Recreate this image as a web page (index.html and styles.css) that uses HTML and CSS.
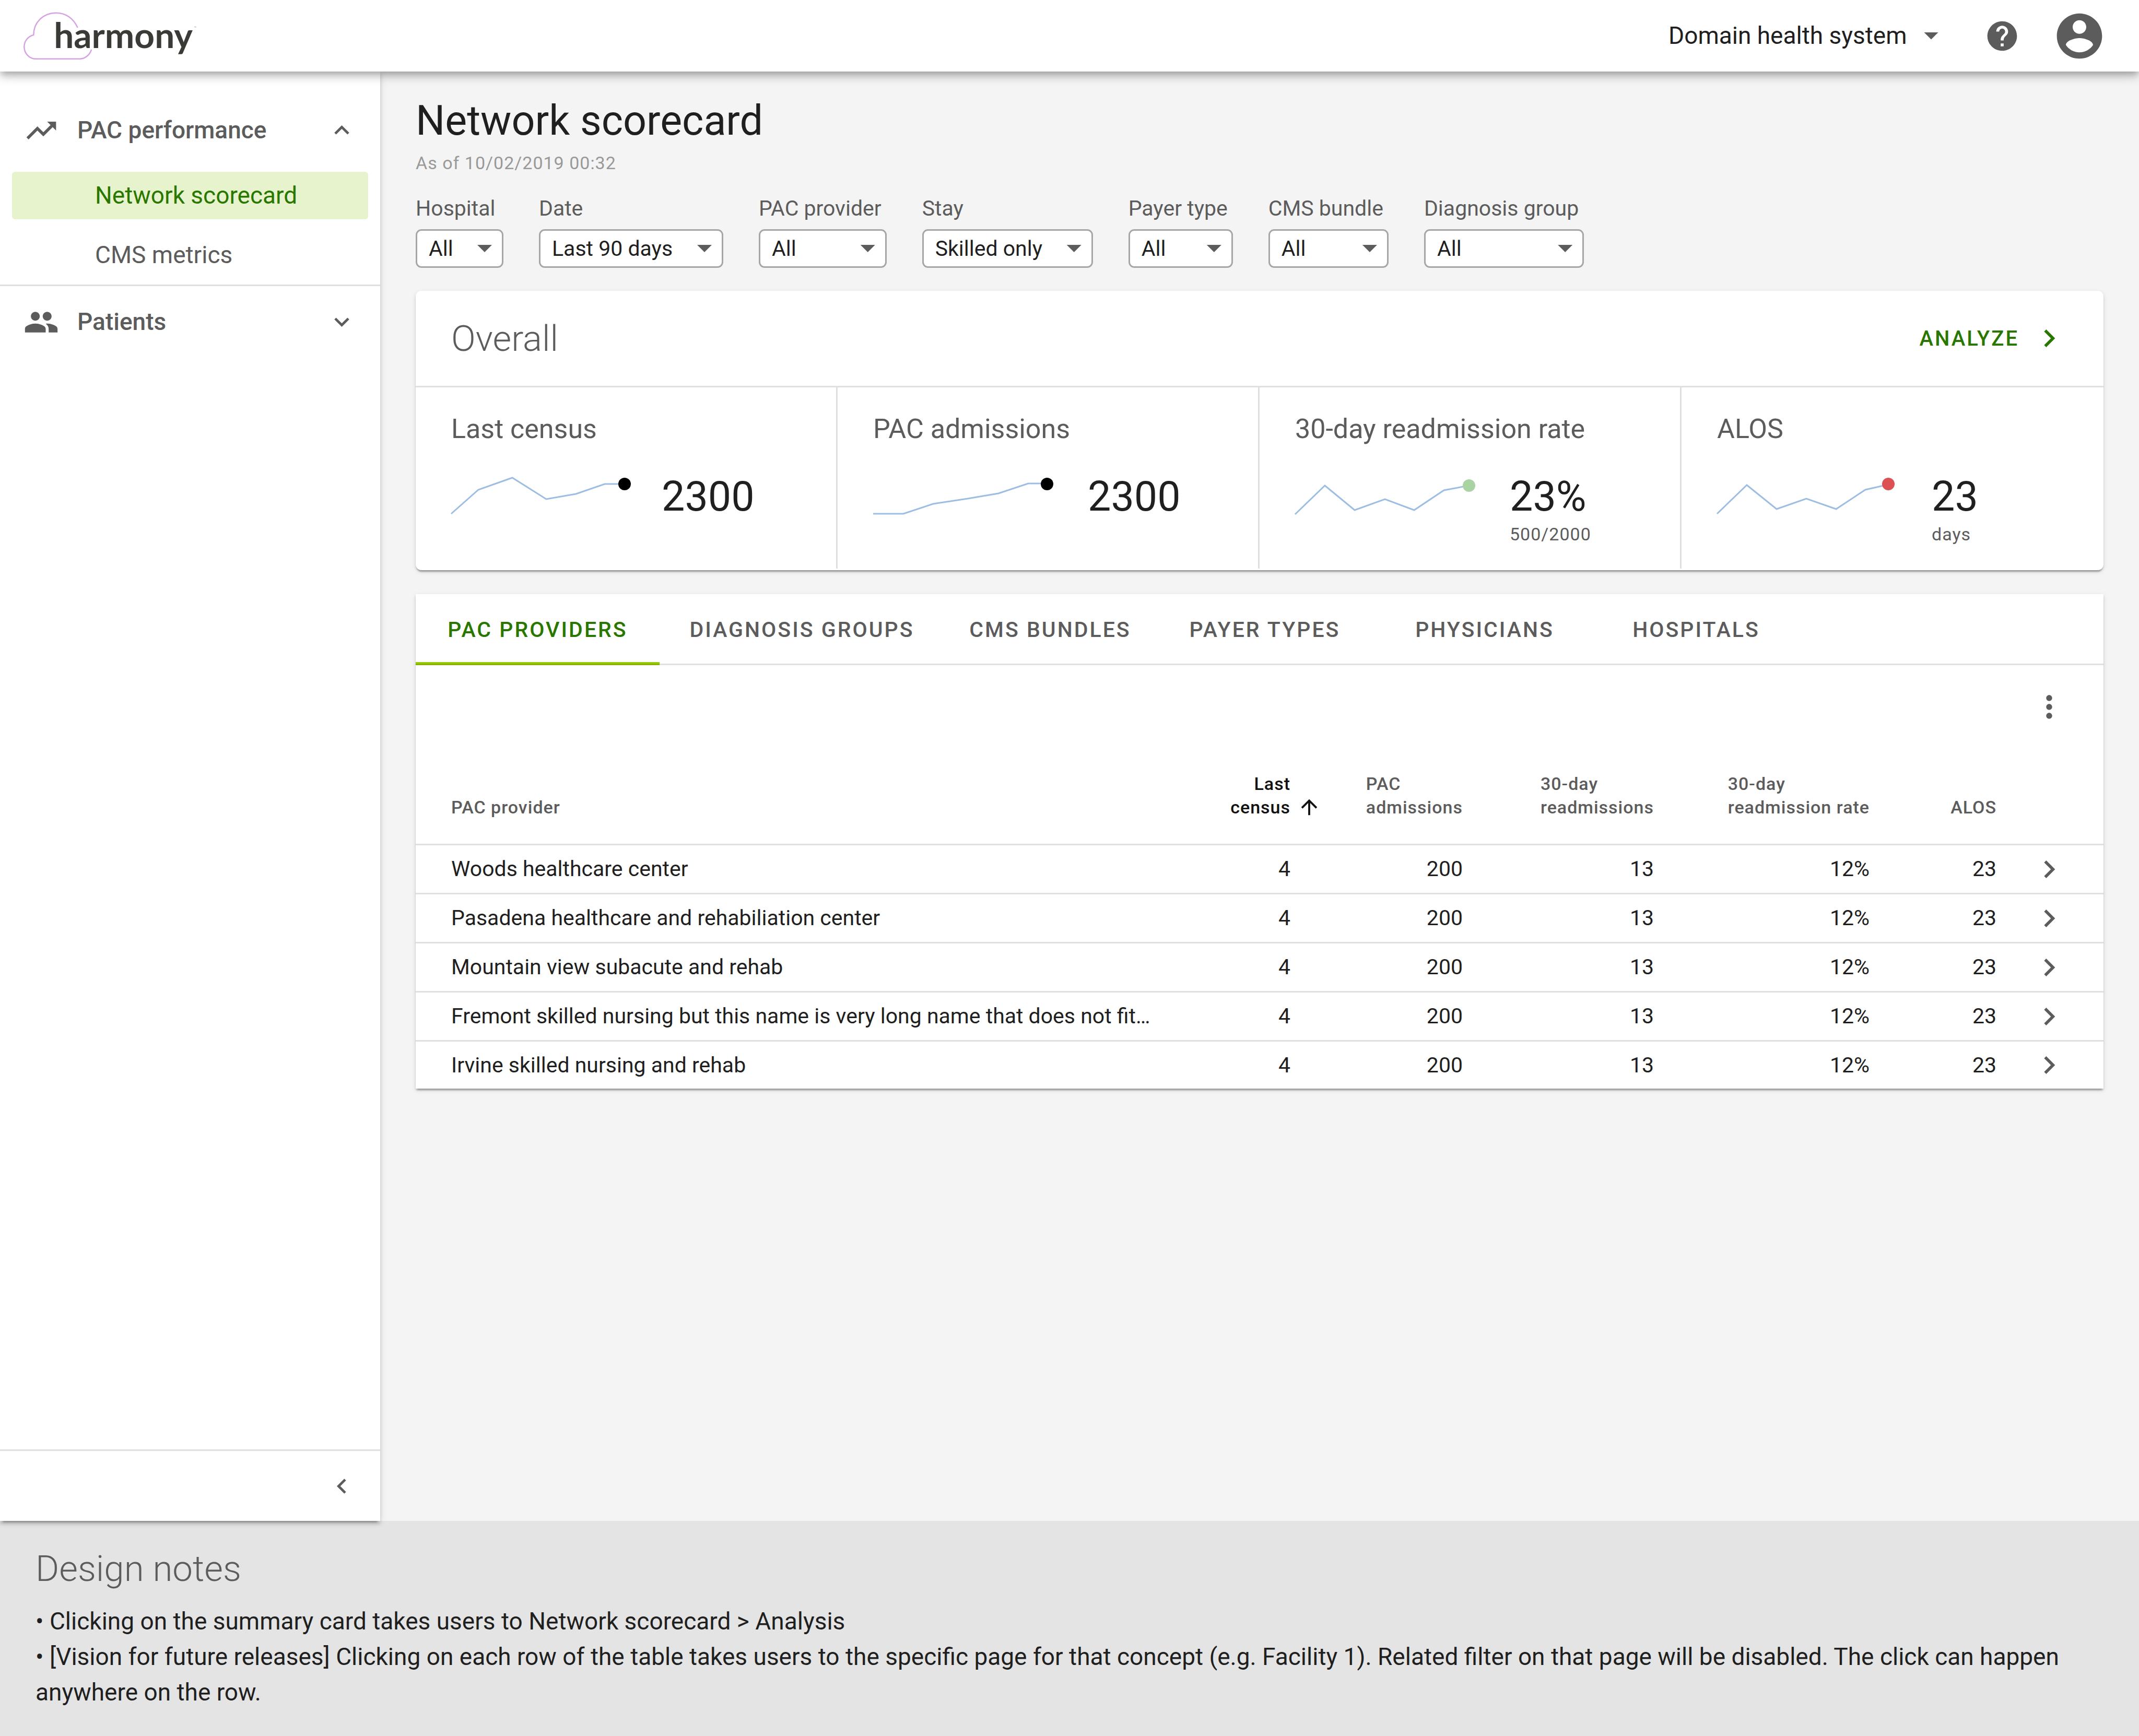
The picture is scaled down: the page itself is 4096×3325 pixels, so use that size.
FILE: index.html
```html
<!DOCTYPE html>
<html lang="en">
<head>
<meta charset="utf-8">
<meta name="viewport" content="width=device-width, initial-scale=1">
<title>Network scorecard</title>
<link rel="stylesheet" href="styles.css">
</head>
<body>
<svg class="sprite" aria-hidden="true">
  <symbol id="trend" viewBox="0 0 24 24"><path d="M16 6l2.29 2.29-4.88 4.88-4-4L2 16.59 3.41 18l6-6 4 4 6.3-6.29L22 12V6z"/></symbol>
  <symbol id="people" viewBox="0 0 24 24"><path d="M16 11c1.66 0 2.99-1.34 2.99-3S17.66 5 16 5c-1.66 0-3 1.34-3 3s1.34 3 3 3zm-8 0c1.66 0 2.99-1.34 2.99-3S9.66 5 8 5C6.34 5 5 6.34 5 8s1.34 3 3 3zm0 2c-2.33 0-7 1.17-7 3.5V19h14v-2.5c0-2.33-4.67-3.5-7-3.5zm8 0c-.29 0-.62.02-.97.05 1.16.84 1.97 1.97 1.97 3.45V19h6v-2.5c0-2.33-4.67-3.5-7-3.5z"/></symbol>
  <symbol id="less" viewBox="0 0 24 24"><path d="M12 8l-6 6 1.41 1.41L12 10.83l4.59 4.58L18 14z"/></symbol>
  <symbol id="more" viewBox="0 0 24 24"><path d="M16.59 8.59L12 13.17 7.41 8.59 6 10l6 6 6-6z"/></symbol>
  <symbol id="left" viewBox="0 0 24 24"><path d="M15.41 7.41L14 6l-6 6 6 6 1.41-1.41L10.83 12z"/></symbol>
  <symbol id="right" viewBox="0 0 24 24"><path d="M10 6L8.59 7.41 13.17 12l-4.58 4.59L10 18l6-6z"/></symbol>
  <symbol id="up" viewBox="0 0 24 24"><path d="M4 12l1.41 1.41L11 7.83V20h2V7.83l5.58 5.59L20 12l-8-8-8 8z"/></symbol>
  <symbol id="dots" viewBox="0 0 24 24"><path d="M12 8c1.1 0 2-.9 2-2s-.9-2-2-2-2 .9-2 2 .9 2 2 2zm0 2c-1.1 0-2 .9-2 2s.9 2 2 2 2-.9 2-2-.9-2-2-2zm0 6c-1.1 0-2 .9-2 2s.9 2 2 2 2-.9 2-2-.9-2-2-2z"/></symbol>
  <symbol id="help" viewBox="0 0 24 24"><path d="M12 2C6.48 2 2 6.48 2 12s4.48 10 10 10 10-4.48 10-10S17.52 2 12 2zm1 17h-2v-2h2v2zm2.07-7.75l-.9.92C13.45 12.9 13 13.5 13 15h-2v-.5c0-1.1.45-2.1 1.17-2.83l1.24-1.26c.37-.36.59-.86.59-1.41 0-1.1-.9-2-2-2s-2 .9-2 2H8c0-2.21 1.79-4 4-4s4 1.79 4 4c0 .88-.36 1.68-.93 2.25z"/></symbol>
  <symbol id="account" viewBox="0 0 24 24"><path d="M12 2C6.48 2 2 6.48 2 12s4.48 10 10 10 10-4.48 10-10S17.52 2 12 2zm0 3c1.66 0 3 1.34 3 3s-1.34 3-3 3-3-1.34-3-3 1.34-3 3-3zm0 14.2c-2.5 0-4.71-1.28-6-3.22.03-1.99 4-3.08 6-3.08 1.99 0 5.97 1.09 6 3.08-1.29 1.94-3.5 3.22-6 3.22z"/></symbol>
</svg>

<header class="topbar">
  <a class="brand" href="#">
    <svg class="brand-logo" viewBox="0 0 1140 360" role="img" aria-label="harmony">
      <path class="cloud" d="M466 268C456 300 428 325 395 325H130C88 325 58 290 58 252C58 215 84 187 115 180C115 105 172 46 252 46C310 46 358 80 382 136"/>
      <text class="wordmark" x="238" y="258">harmony</text>
      <text class="mark" x="1088" y="146">™</text>
    </svg>
  </a>
  <div class="topbar-tools">
    <span class="picker picker-plain">
      <select aria-label="Organization"><option>Domain health system</option></select>
    </span>
    <button class="icon-button" type="button" aria-label="Help"><svg class="icon"><use href="#help"/></svg></button>
    <button class="icon-button" type="button" aria-label="Account"><svg class="icon icon-large"><use href="#account"/></svg></button>
  </div>
</header>

<div class="layout">
  <nav class="sidebar">
    <button class="nav-group" type="button"><svg class="icon"><use href="#trend"/></svg><span class="nav-title">PAC performance</span><svg class="icon icon-small"><use href="#less"/></svg></button>
    <div class="nav-items">
      <a class="nav-item nav-item-active" href="#">Network scorecard</a>
      <a class="nav-item" href="#">CMS metrics</a>
    </div>
    <button class="nav-group nav-group-ruled" type="button"><svg class="icon"><use href="#people"/></svg><span class="nav-title">Patients</span><svg class="icon icon-small"><use href="#more"/></svg></button>
    <button class="nav-collapse" type="button" aria-label="Collapse"><svg class="icon icon-small"><use href="#left"/></svg></button>
  </nav>

  <main class="content">
    <h1 class="page-title">Network scorecard</h1>
    <p class="as-of">As of 10/02/2019 00:32</p>

    <form class="filters">
      <label class="filter"><span class="filter-label">Hospital</span><span class="picker"><select><option>All</option></select></span></label>
      <label class="filter"><span class="filter-label">Date</span><span class="picker"><select><option>Last 90 days</option></select></span></label>
      <label class="filter"><span class="filter-label">PAC provider</span><span class="picker"><select><option>All</option></select></span></label>
      <label class="filter"><span class="filter-label">Stay</span><span class="picker"><select><option>Skilled only</option></select></span></label>
      <label class="filter"><span class="filter-label">Payer type</span><span class="picker"><select><option>All</option></select></span></label>
      <label class="filter"><span class="filter-label">CMS bundle</span><span class="picker"><select><option>All</option></select></span></label>
      <label class="filter"><span class="filter-label">Diagnosis group</span><span class="picker"><select><option>All</option></select></span></label>
    </form>

    <section class="card overall">
      <div class="overall-head">
        <h2 class="section-title">Overall</h2>
        <a class="analyze" href="#">ANALYZE<svg class="icon"><use href="#right"/></svg></a>
      </div>
      <div class="metrics">
        <div class="metric">
          <h3 class="metric-name">Last census</h3>
          <div class="metric-body">
            <svg class="spark spark-short" viewBox="0 2 336 91"><polyline points="0,80 52,34 117,11 182,52 239,42 294,23 332,23"/><circle cx="332" cy="23" r="12"/></svg>
            <div><p class="metric-value">2300</p></div>
          </div>
        </div>
        <div class="metric">
          <h3 class="metric-name">PAC admissions</h3>
          <div class="metric-body">
            <svg class="spark" viewBox="0 2 344 91"><polyline points="0,80 58,80 115,61 181,51 240,41 297,22 333,22"/><circle cx="333" cy="23" r="12"/></svg>
            <div><p class="metric-value">2300</p></div>
          </div>
        </div>
        <div class="metric">
          <h3 class="metric-name">30-day readmission rate</h3>
          <div class="metric-body">
            <svg class="spark spark-good" viewBox="0 2 344 91"><polyline points="0,81 57,26 114,73 172,52 228,73 285,35 333,26"/><circle cx="333" cy="26" r="12"/></svg>
            <div><p class="metric-value">23%</p><p class="metric-note">500/2000</p></div>
          </div>
        </div>
        <div class="metric">
          <h3 class="metric-name">ALOS</h3>
          <div class="metric-body">
            <svg class="spark spark-bad" viewBox="0 2 344 91"><polyline points="0,80 57,25 114,71 171,51 228,71 284,34 328,24"/><circle cx="328" cy="23" r="12"/></svg>
            <div><p class="metric-value">23</p><p class="metric-note">days</p></div>
          </div>
        </div>
      </div>
    </section>

    <section class="card">
      <div class="tabs" role="tablist">
        <button class="tab tab-active" type="button" role="tab" aria-selected="true">PAC PROVIDERS</button>
        <button class="tab" type="button" role="tab">DIAGNOSIS GROUPS</button>
        <button class="tab" type="button" role="tab">CMS BUNDLES</button>
        <button class="tab" type="button" role="tab">PAYER TYPES</button>
        <button class="tab" type="button" role="tab">PHYSICIANS</button>
        <button class="tab" type="button" role="tab">HOSPITALS</button>
      </div>
      <div class="table-tools">
        <button class="icon-button" type="button" aria-label="More"><svg class="icon"><use href="#dots"/></svg></button>
      </div>
      <table class="providers">
        <colgroup><col><col class="col-census"><col class="col-admissions"><col class="col-readmissions"><col class="col-rate"><col class="col-alos"><col class="col-open"></colgroup>
        <thead>
          <tr>
            <th class="name" scope="col">PAC provider</th>
            <th class="sorted" scope="col" aria-sort="ascending"><button class="sort" type="button"><span>Last<br>census</span><svg class="icon icon-tiny"><use href="#up"/></svg></button></th>
            <th scope="col"><span class="heading">PAC<br>admissions</span></th>
            <th scope="col"><span class="heading">30-day<br>readmissions</span></th>
            <th scope="col"><span class="heading">30-day<br>readmission rate</span></th>
            <th scope="col">ALOS</th>
            <td></td>
          </tr>
        </thead>
        <tbody>
          <tr><td class="name">Woods healthcare center</td><td class="census">4</td><td>200</td><td>13</td><td>12%</td><td>23</td><td><a class="open" href="#" aria-label="Open"><svg class="icon"><use href="#right"/></svg></a></td></tr>
          <tr><td class="name">Pasadena healthcare and rehabiliation center</td><td class="census">4</td><td>200</td><td>13</td><td>12%</td><td>23</td><td><a class="open" href="#" aria-label="Open"><svg class="icon"><use href="#right"/></svg></a></td></tr>
          <tr><td class="name">Mountain view subacute and rehab</td><td class="census">4</td><td>200</td><td>13</td><td>12%</td><td>23</td><td><a class="open" href="#" aria-label="Open"><svg class="icon"><use href="#right"/></svg></a></td></tr>
          <tr><td class="name">Fremont skilled nursing but this name is very long name that does not fit…</td><td class="census">4</td><td>200</td><td>13</td><td>12%</td><td>23</td><td><a class="open" href="#" aria-label="Open"><svg class="icon"><use href="#right"/></svg></a></td></tr>
          <tr><td class="name">Irvine skilled nursing and rehab</td><td class="census">4</td><td>200</td><td>13</td><td>12%</td><td>23</td><td><a class="open" href="#" aria-label="Open"><svg class="icon"><use href="#right"/></svg></a></td></tr>
        </tbody>
      </table>
    </section>
  </main>
</div>

<footer class="notes">
  <h2 class="section-title">Design notes</h2>
  <p class="note">• Clicking on the summary card takes users to Network scorecard &gt; Analysis</p>
  <p class="note">• [Vision for future releases] Clicking on each row of the table takes users to the specific page for that concept (e.g. Facility 1). Related filter on that page will be disabled. The click can happen anywhere on the row.</p>
</footer>
</body>
</html>
```
FILE: styles.css
```css
* {
  box-sizing: border-box;
  margin: 0;
  padding: 0;
}

:root {
  --ink: #1f1f1f;
  --muted: #5c5c5c;
  --rule: #e0e0e0;
  --green: #2a7700;
}

body {
  display: flex;
  flex-direction: column;
  min-height: 100vh;
  background: #f4f4f4;
  color: var(--ink);
  font: 400 41px/57px Roboto, "Liberation Sans", sans-serif;
}

button,
select {
  border: 0;
  background: none;
  color: inherit;
  font: inherit;
  letter-spacing: inherit;
}

a {
  color: inherit;
  text-decoration: none;
}

.sprite {
  display: none;
}

.icon {
  display: block;
  flex: none;
  width: 68px;
  height: 68px;
  fill: currentColor;
}

.icon-large {
  width: 104px;
  height: 104px;
}

.icon-small {
  width: 57px;
  height: 57px;
}

.icon-tiny {
  width: 46px;
  height: 46px;
}

.icon-button {
  display: block;
  color: var(--muted);
}

/* Top bar */

.topbar {
  position: relative;
  z-index: 3;
  display: flex;
  align-items: center;
  justify-content: space-between;
  height: 137px;
  padding: 0 62px 0 28px;
  background: #fff;
  box-shadow: 0 6px 11px -3px rgba(0, 0, 0, .2), 0 11px 14px rgba(0, 0, 0, .14), 0 3px 28px rgba(0, 0, 0, .12);
}

.brand {
  padding-bottom: 4px;
}

.brand-logo {
  display: block;
  width: 360px;
  height: 114px;
}

.cloud {
  fill: none;
  stroke: #d6a4e2;
  stroke-width: 8;
}

.wordmark {
  fill: #3a3b36;
  font: 700 214px Lato, "Open Sans", sans-serif;
}

.mark {
  fill: #999;
  font: 400 24px Roboto, sans-serif;
}

.topbar-tools {
  display: flex;
  align-items: center;
  gap: 62px;
}

/* Drop-downs with a triangle over their right end */

.picker {
  display: grid;
  align-items: center;
}

.picker select {
  grid-area: 1 / 1;
  height: 74px;
  padding: 0 93px 0 22px;
  border: 3px solid #a6a6a6;
  border-radius: 11px;
  background: #fff;
  appearance: none;
}

.picker::after {
  content: "";
  grid-area: 1 / 1;
  justify-self: end;
  width: 28px;
  height: 14px;
  margin-right: 22px;
  background: var(--muted);
  clip-path: polygon(0 0, 100% 0, 50% 100%);
  pointer-events: none;
}

.picker-plain {
  margin-right: 26px;
  font-size: 46px;
}

.picker-plain select {
  padding: 0 60px 0 0;
  border: 0;
}

.picker-plain::after {
  margin-right: 0;
}

/* Layout */

.layout {
  display: flex;
  flex: 1;
}

.sidebar {
  position: relative;
  z-index: 2;
  display: flex;
  flex: none;
  flex-direction: column;
  width: 728px;
  padding-top: 44px;
  background: #fff;
  color: var(--muted);
  font-size: 46px;
  box-shadow: 0 9px 3px -6px rgba(0, 0, 0, .2), 0 6px 6px rgba(0, 0, 0, .14), 0 3px 14px rgba(0, 0, 0, .12);
}

.nav-group {
  display: flex;
  align-items: center;
  gap: 35px;
  height: 137px;
  padding: 0 45px;
  font-weight: 500;
  text-align: left;
}

.nav-group-ruled {
  height: 140px;
  border-top: 3px solid var(--rule);
}

.nav-title {
  flex: 1;
}

.nav-items {
  display: flex;
  flex-direction: column;
  gap: 23px;
  padding: 11px 23px;
}

.nav-item {
  padding: 17px 23px 17px 159px;
  border-radius: 6px;
}

.nav-item-active {
  background: #e7f3cc;
  color: var(--green);
}

.nav-collapse {
  display: flex;
  align-items: center;
  justify-content: flex-end;
  height: 137px;
  margin-top: auto;
  padding: 0 45px;
  border-top: 3px solid var(--rule);
}

.content {
  flex: 1;
  min-width: 0;
  padding: 49px 68px 68px;
}

.page-title {
  font-size: 79px;
  font-weight: 400;
  line-height: 91px;
}

.as-of {
  margin-top: 12px;
  color: #999;
  font-size: 34px;
  line-height: 46px;
  letter-spacing: 1px;
}

.filters {
  display: flex;
  gap: 68px;
  margin-top: 36px;
}

.filter {
  display: flex;
  flex-direction: column;
  gap: 11px;
}

.filter-label {
  padding-right: 10px;
  color: var(--muted);
}

/* Cards */

.card {
  margin-top: 46px;
  background: #fff;
  box-shadow: 0 6px 3px -3px rgba(0, 0, 0, .2), 0 3px 3px rgba(0, 0, 0, .14), 0 3px 9px rgba(0, 0, 0, .12);
}

.overall {
  margin-top: 44px;
  padding-bottom: 3px;
  border-radius: 11px;
}

.overall-head {
  display: flex;
  align-items: center;
  justify-content: space-between;
  height: 185px;
  padding: 0 70px 0 68px;
  border-bottom: 3px solid var(--rule);
}

.section-title {
  color: var(--muted);
  font-size: 69px;
  font-weight: 300;
  line-height: 91px;
}

.analyze {
  display: flex;
  align-items: center;
  gap: 24px;
  color: var(--green);
  font-size: 40px;
  font-weight: 500;
  letter-spacing: 3px;
}

.metrics {
  display: grid;
  grid-template-columns: repeat(4, 1fr);
}

.metric {
  padding: 46px 0 43px 68px;
}

.metric:not(:last-child) {
  border-right: 3px solid var(--rule);
}

.metric-name {
  color: var(--muted);
  font-size: 52px;
  font-weight: 400;
  line-height: 68px;
}

.metric-body {
  display: flex;
  gap: 67px;
  min-height: 140px;
  margin-top: 50px;
}

.spark {
  flex: none;
  width: 344px;
  height: 91px;
  overflow: visible;
}

.spark-short {
  width: 336px;
}

.spark polyline {
  fill: none;
  stroke: #9dbde2;
  stroke-width: 3;
}

.spark circle {
  fill: #000;
}

.spark-good circle {
  fill: #a9d3a3;
}

.spark-bad circle {
  fill: #dc5154;
}

.metric-value {
  font-size: 79px;
  line-height: 91px;
}

.metric-note {
  margin-top: 3px;
  color: var(--muted);
  font-size: 34px;
  line-height: 46px;
  letter-spacing: 1px;
}

/* Tabs */

.tabs {
  display: grid;
  grid-template-columns: 467px 545px 406px 416px 426px 384px;
  box-shadow: inset 0 -3px var(--rule);
}

.tab {
  height: 136px;
  color: var(--muted);
  font-size: 41px;
  font-weight: 500;
  letter-spacing: 3px;
}

.tab-active {
  color: var(--green);
  box-shadow: inset 0 -3px #86b200, inset 0 -6px #99cc0a;
}

/* Provider table */

.table-tools {
  display: flex;
  justify-content: flex-end;
  padding: 46px 70px;
}

.providers {
  width: 100%;
  border-collapse: separate;
  border-spacing: 0;
  table-layout: fixed;
  text-align: right;
}

.col-census {
  width: 240px;
}

.col-admissions {
  width: 320px;
}

.col-readmissions {
  width: 366px;
}

.col-rate {
  width: 413px;
}

.col-alos {
  width: 243px;
}

.col-open {
  width: 137px;
}

.providers th,
.providers td {
  padding: 0 68px 0 0;
  border-bottom: 3px solid var(--rule);
  white-space: nowrap;
}

.providers td:last-child {
  padding-right: 70px;
}

.providers th {
  padding-top: 45px;
  padding-bottom: 47px;
  color: var(--muted);
  font-size: 34px;
  font-weight: 500;
  line-height: 45px;
  letter-spacing: 1px;
  vertical-align: bottom;
}

.providers tbody td {
  height: 94px;
}

.providers tbody tr:last-child td {
  height: 90px;
  border-bottom: 0;
}

.providers .name {
  padding-left: 68px;
  text-align: left;
}

.providers .census {
  padding-right: 78px;
}

.providers .sorted {
  padding-right: 19px;
  color: #111;
}

.sort {
  display: flex;
  align-items: flex-end;
  justify-content: flex-end;
  gap: 13px;
  width: 100%;
  text-align: right;
}

.heading {
  display: inline-block;
  text-align: left;
  vertical-align: bottom;
}

.open {
  display: flex;
  justify-content: flex-end;
  color: var(--muted);
}

/* Notes */

.notes {
  padding: 46px 68px 50px;
  background: #e4e4e4;
}

.notes .section-title {
  margin-bottom: 21px;
}

.note {
  font-size: 46px;
  line-height: 68px;
}
```
